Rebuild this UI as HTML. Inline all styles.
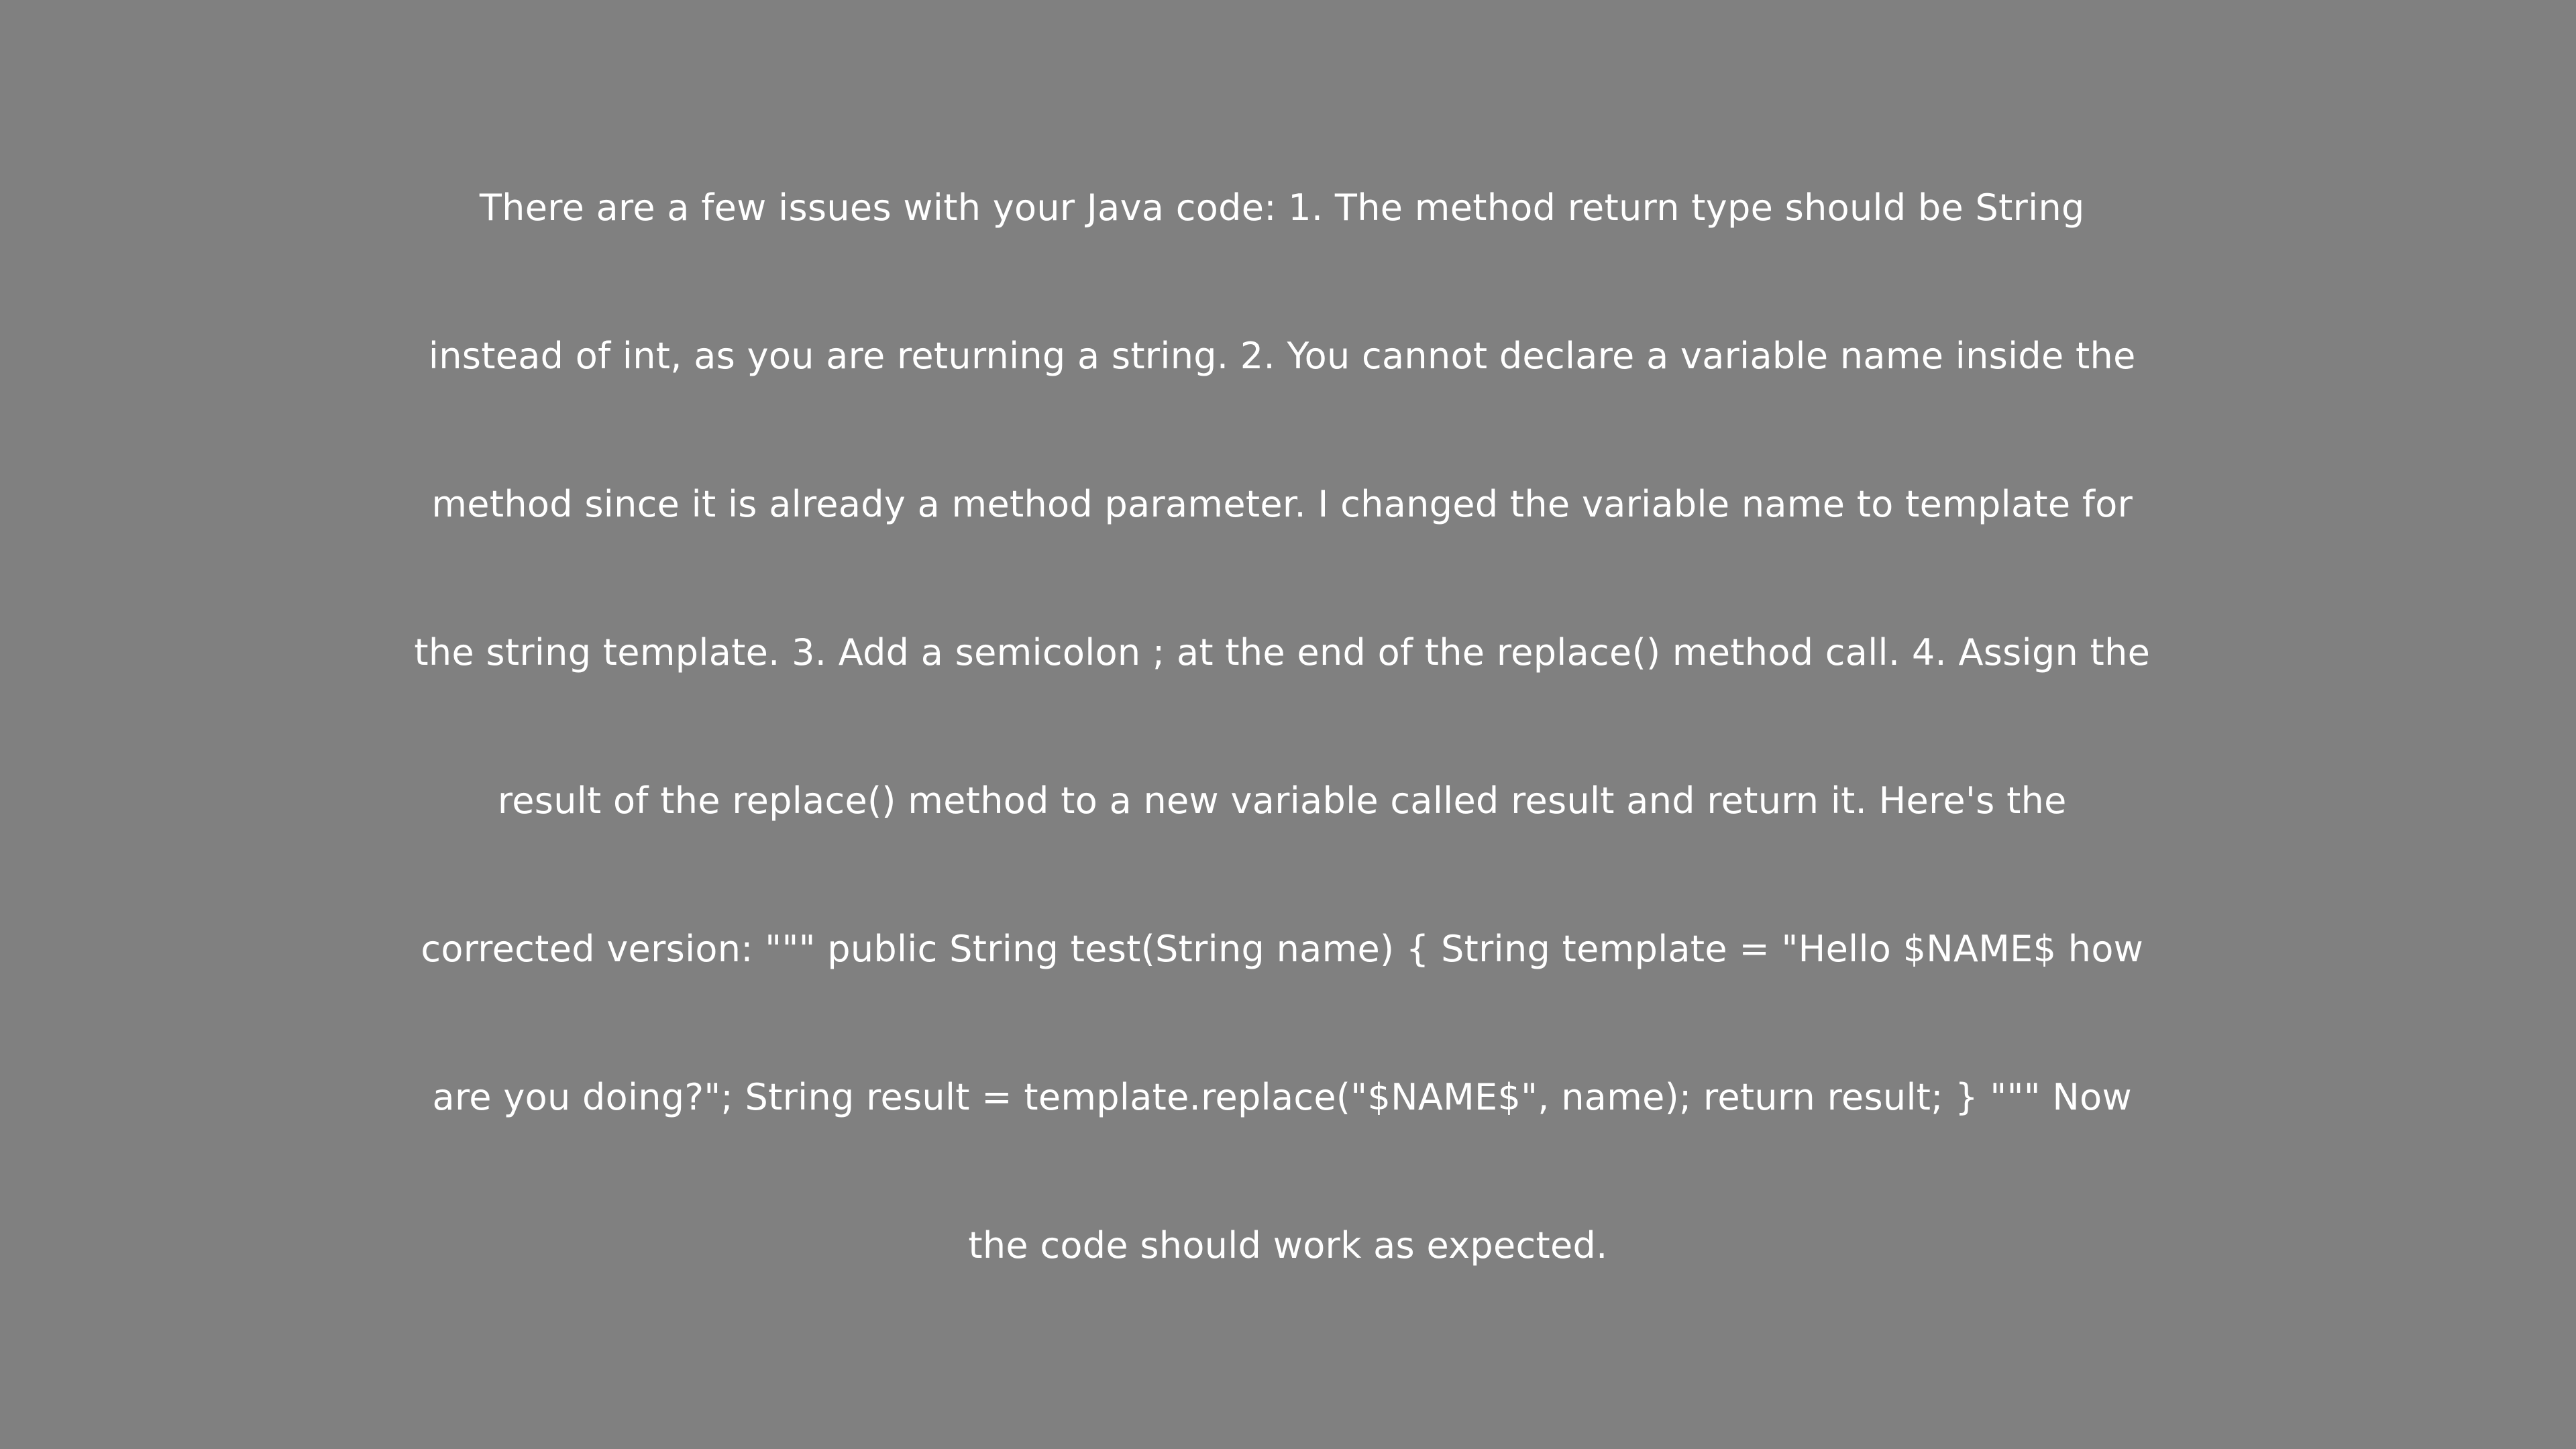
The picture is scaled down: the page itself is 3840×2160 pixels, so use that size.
<!DOCTYPE html>
<html><head><meta charset="utf-8"><style>
html,body{margin:0;padding:0;width:3840px;height:2160px;background:#808080;overflow:hidden}
.t{position:absolute;left:0;top:199px;width:3840px;text-align:center;color:#fff;font-family:"DejaVu Sans","Liberation Sans",sans-serif;font-size:54px;letter-spacing:0.32px;line-height:221px;white-space:nowrap}
</style></head><body>
<div class="t">There are a few issues with your Java code: 1. The method return type should be String&nbsp;<br>instead of int, as you are returning a string. 2. You cannot declare a variable name inside the&nbsp;<br>method since it is already a method parameter. I changed the variable name to template for&nbsp;<br>the string template. 3. Add a semicolon ; at the end of the replace() method call. 4. Assign the&nbsp;<br>result of the replace() method to a new variable called result and return it. Here's the&nbsp;<br>corrected version: """ public String test(String name) { String template = "Hello $NAME$ how&nbsp;<br>are you doing?"; String result = template.replace("$NAME$", name); return result; } """ Now&nbsp;<br>the code should work as expected.</div>
</body></html>
